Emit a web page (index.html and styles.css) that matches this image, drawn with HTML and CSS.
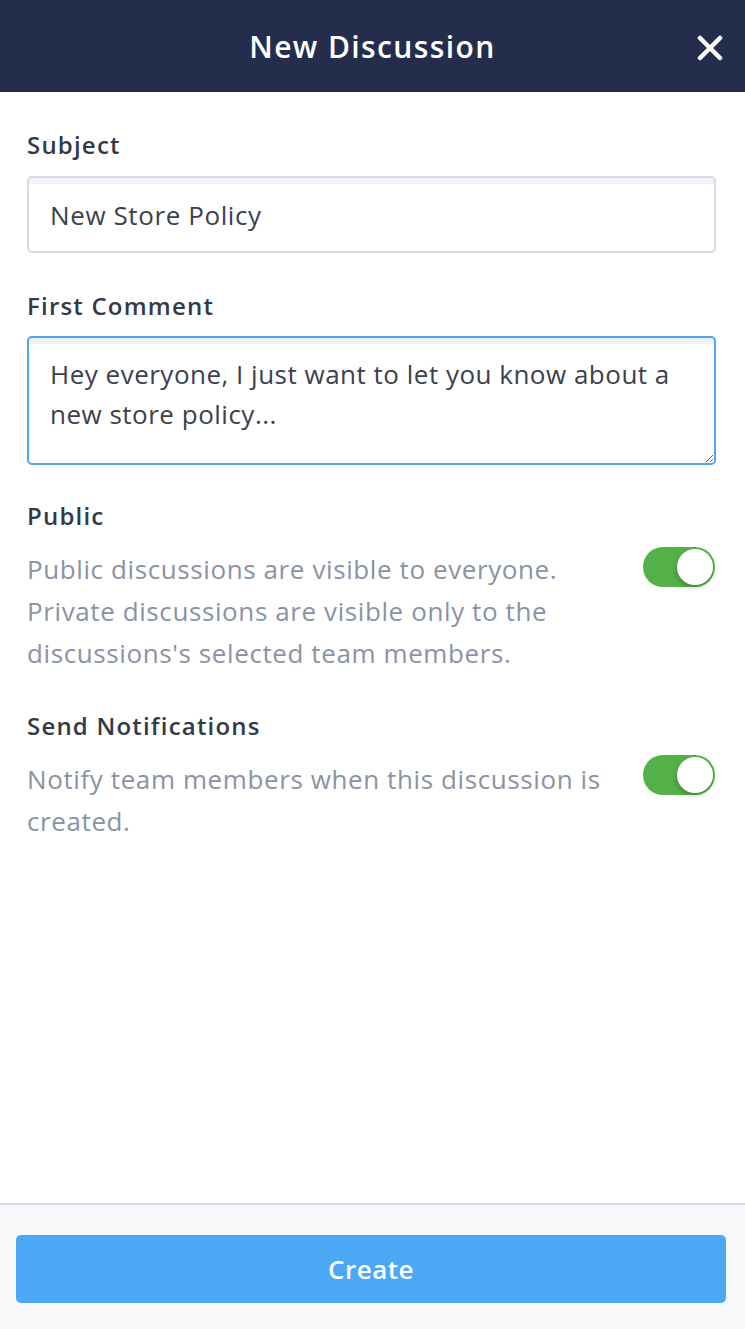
FILE: index.html
```html
<!DOCTYPE html>
<html>
<head>
    <title>New Discussion</title>
    <link rel="stylesheet" href="styles.css">
</head>
<body>
    <div class="modal">
        <div class="header">
            <h1>New Discussion</h1>
            <button class="close" type="button" aria-label="Close">
                <svg width="26" height="26" viewBox="0 0 26 26"><path d="M3 3L23 23M23 3L3 23" stroke="#fff" stroke-width="4.5" stroke-linecap="round"/></svg>
            </button>
        </div>

        <form class="body" id="discussionForm">
            <label class="field-label" for="subject">Subject</label>
            <input type="text" id="subject" class="input" value="New Store Policy">

            <label class="field-label" for="comment">First Comment</label>
            <textarea id="comment" class="input textarea">Hey everyone, I just want to let you know about a new store policy...</textarea>

            <div class="option">
                <div class="option-title">Public</div>
                <div class="option-row">
                    <p>Public discussions are visible to everyone. Private discussions are visible only to the discussions's selected team members.</p>
                    <span class="toggle on"><span class="knob"></span></span>
                </div>
            </div>

            <div class="option">
                <div class="option-title">Send Notifications</div>
                <div class="option-row">
                    <p>Notify team members when this discussion is created.</p>
                    <span class="toggle on"><span class="knob"></span></span>
                </div>
            </div>
        </form>

        <div class="footer">
            <button type="button" class="create">Create</button>
        </div>
    </div>
</body>
</html>
```

FILE: styles.css
```css
body {
    margin: 0;
    font-family: "Open Sans", Lato, Arial, sans-serif;
    background-color: #fff;
    color: #333a47;
}
.modal {
    width: 745px;
    height: 1329px;
    display: flex;
    flex-direction: column;
}
.header {
    height: 92px;
    background-color: #252d4d;
    display: flex;
    align-items: center;
    justify-content: center;
    position: relative;
}
.header h1 {
    margin: 0;
    color: #fff;
    font-size: 30px;
    font-weight: 600;
    letter-spacing: 1.4px;
}
.close {
    position: absolute;
    right: 22px;
    top: 35px;
    background: none;
    border: none;
    padding: 0;
    cursor: pointer;
    line-height: 0;
}
.body {
    flex: 1;
    padding: 0 30px 0 27px;
    display: flex;
    flex-direction: column;
}
.field-label {
    display: block;
    font-size: 24px;
    font-weight: 600;
    letter-spacing: 1.2px;
    margin-top: 38px;
    line-height: 30px;
    height: 30px;
}
.input {
    display: block;
    box-sizing: border-box;
    width: 689px;
    margin-top: 16px;
    height: 77px;
    padding: 0 21px;
    border: 2px solid #d5dbe5;
    border-radius: 5px;
    box-shadow: inset 0 6px 0 #f1f3f7;
    font-family: inherit;
    font-size: 26px;
    letter-spacing: 0.6px;
    color: #3b414d;
    outline: none;
}
.textarea {
    height: 129px;
    margin-top: 15px;
    padding: 16px 21px;
    line-height: 40px;
    letter-spacing: 0.5px;
    border-color: #4ea6f2;
    resize: vertical;
}
.option {
    margin-top: 36px;
}
.option + .option {
    margin-top: 37px;
}
.option-title {
    font-size: 24px;
    font-weight: 600;
    letter-spacing: 1.2px;
    line-height: 30px;
}
.option-row {
    display: flex;
    justify-content: space-between;
    align-items: flex-start;
}
.option-row p {
    margin: 17px 0 0;
    width: 590px;
    font-size: 26px;
    letter-spacing: 0.6px;
    line-height: 42px;
    color: #8a93a3;
}
.toggle {
    margin-top: 16px;
    width: 72px;
    height: 40px;
    border-radius: 20px;
    background-color: #53b148;
    position: relative;
    flex-shrink: 0;
}
.option + .option .toggle {
    margin-top: 14px;
}
.knob {
    position: absolute;
    top: 2px;
    right: 2px;
    width: 36px;
    height: 36px;
    border-radius: 50%;
    background-color: #fff;
    box-shadow: -1px 3px 4px rgba(0, 0, 0, 0.2);
}
.footer {
    border-top: 2px solid #dadde7;
    background-color: #f7f8fa;
    height: 126px;
    box-sizing: border-box;
    padding: 30px 19px 0 16px;
}
.create {
    width: 100%;
    height: 68px;
    background-color: #4aa8f5;
    color: #fff;
    border: none;
    border-radius: 5px;
    font-family: inherit;
    font-size: 26px;
    font-weight: 600;
    letter-spacing: 0.5px;
    cursor: pointer;
}
```
